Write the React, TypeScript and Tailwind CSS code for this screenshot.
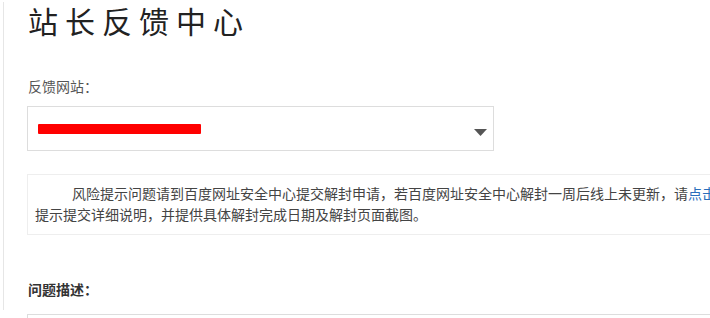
import React from "react";

export default function App() {
  return (
    <div className="w-[710px] h-[318px] overflow-hidden bg-white" style={{ fontFamily: '"Noto Sans CJK SC", "Noto Sans", sans-serif' }}>
      <div className="ml-[3px] mt-[10px] h-[308px] border-l border-[#e6e6e6] pl-[23px]">
        <h1 className="-mt-[8px] pl-[1px] text-[30px] leading-[36px] tracking-[7px] text-[#222] whitespace-nowrap">站长反馈中心</h1>
        <div className="mt-[38px] pl-[1px] text-[14px] leading-[20px] text-[#555]">反馈网站：</div>
        <div className="mt-[10px] w-[467px] h-[45px] border border-[#dddddd] flex items-center justify-between pl-[10px] pr-[6px]">
          <div className="relative w-[163px] h-[10px] mt-[1px]">
            <div className="absolute inset-0 rounded-[1px] bg-[#ff0000]" />
          </div>
          <svg width="13" height="7" viewBox="0 0 13 7" className="mt-[7px]">
            <path d="M0 0 H13 L6.5 7 Z" fill="#555" />
          </svg>
        </div>
        <div className="mt-[23px] w-[760px] h-[61px] border border-[#eeeeee] pl-[7px] pt-[8px] text-[14px] leading-[21px] text-[#444] whitespace-nowrap">
          <div className="pl-[37px]">
            风险提示问题请到百度网址安全中心提交解封申请，若百度网址安全中心解封一周后线上未更新，请<span className="text-[#2a6ebb]">点击这里</span>按照
          </div>
          <div>提示提交详细说明，并提供具体解封完成日期及解封页面截图。</div>
        </div>
        <div className="mt-[44px] pl-[1px] text-[14px] leading-[20px] font-bold text-[#333]">问题描述：</div>
        <div className="mt-[15px] w-[700px] h-[40px] border border-[#dddddd]" />
      </div>
    </div>
  );
}
